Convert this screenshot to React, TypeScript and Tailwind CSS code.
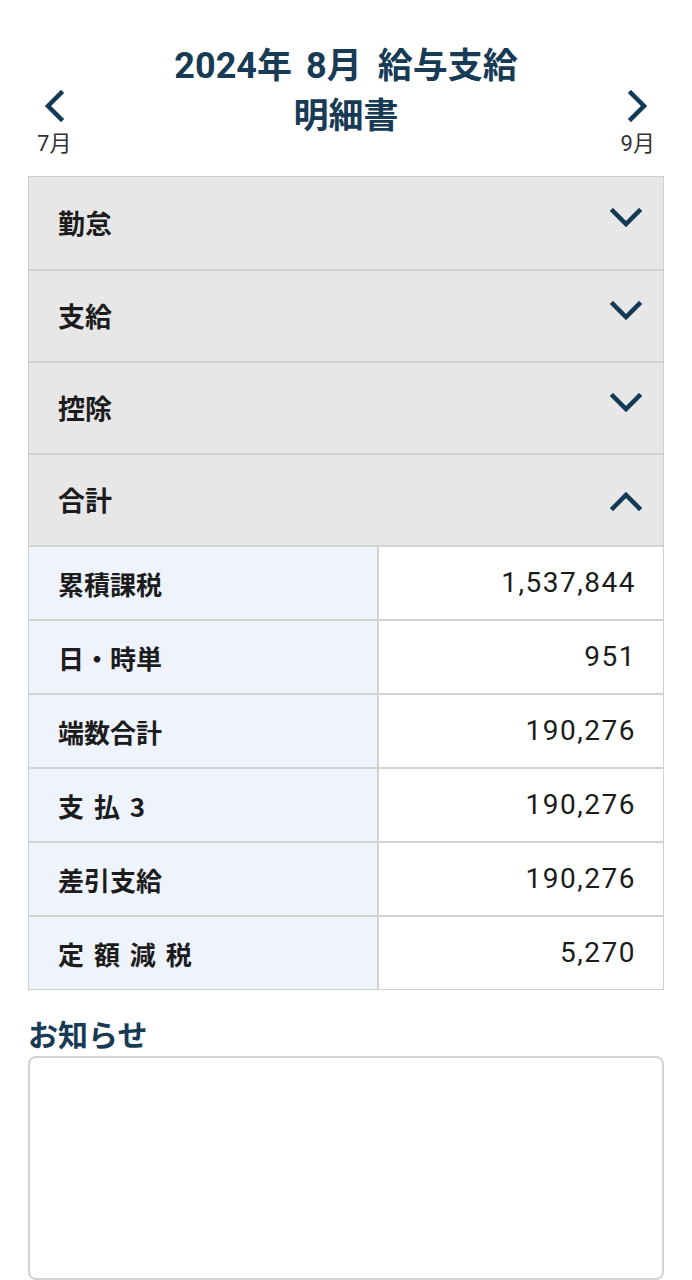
import { useState } from 'react'

const sections = ['勤怠', '支給', '控除', '合計']

const totals = [
	{ label: '累積課税', value: '1,537,844' },
	{ label: '日・時単', value: '951' },
	{ label: '端数合計', value: '190,276' },
	{ label: '支 払 3', value: '190,276' },
	{ label: '差引支給', value: '190,276' },
	{ label: '定 額 減 税', value: '5,270' },
]

const Chevron = ({ dir }: { dir: 'up' | 'down' | 'left' | 'right' }) => {
	const paths = {
		down: 'M3 3 L16 16 L29 3',
		up: 'M3 17 L16 4 L29 17',
		left: 'M17 3 L4 16 L17 29',
		right: 'M4 3 L17 16 L4 29',
	}
	const horizontal = dir === 'left' || dir === 'right'
	return (
		<svg
			width={horizontal ? 21 : 32}
			height={horizontal ? 32 : 20}
			viewBox={horizontal ? '0 0 21 32' : '0 0 32 20'}
			fill="none"
			stroke="#123a56"
			strokeWidth={4.5}
			strokeLinecap="square"
		>
			<path d={paths[dir]} />
		</svg>
	)
}

const App = () => {
	const [open, setOpen] = useState<string>('合計')

	return (
		<div
			className="min-h-screen w-[692px] bg-white text-[#1c1c1c]"
			style={{ fontFamily: '"Noto Sans CJK JP", "Noto Sans", sans-serif' }}
		>
			<div className="flex items-start justify-between px-[37px] pt-[38px]">
				<div className="flex flex-col items-center pt-[52px]">
					<Chevron dir="left" />
					<span className="mt-[8px] text-[22px] leading-none text-[#333]">
						<span className="font-['Roboto']">7</span>月
					</span>
				</div>
				<h1 className="text-center text-[35px] font-bold leading-[50px] text-[#173a55]">
					<span className="font-['Roboto'] text-[36px] leading-none">2024</span>年
					<span className="ml-[14px] font-['Roboto'] text-[36px] leading-none">8</span>月
					<span className="ml-[16px]">給与支給</span>
					<br />
					明細書
				</h1>
				<div className="flex flex-col items-center pt-[52px]">
					<Chevron dir="right" />
					<span className="mt-[8px] text-[22px] leading-none text-[#333]">
						<span className="font-['Roboto']">9</span>月
					</span>
				</div>
			</div>

			<div className="mx-[28px] mt-[21px] border border-[#cfcfcf]">
				{sections.map((s, i) => (
					<div key={s}>
						<button
							onClick={() => setOpen(open === s ? '' : s)}
							className={`flex h-[92px] w-full items-center justify-between bg-[#e7e7e7] pl-[29px] pr-[21px] ${i > 0 ? 'border-t-2 border-[#d2d2d2]' : ''}`}
						>
							<span className="text-[27px] font-bold">{s}</span>
							<span className={open === s ? 'mt-[2px]' : '-mt-[10px]'}>
								<Chevron dir={open === s ? 'up' : 'down'} />
							</span>
						</button>
						{open === s && s === '合計' && (
							<div>
								{totals.map((row) => (
									<div key={row.label} className="grid h-[74px] grid-cols-[348px_1fr] border-t-2 border-[#d2d2d2]">
										<div className="flex items-center bg-[#eef3fc] pl-[29px] text-[26px] font-bold [word-spacing:4px]">
											{row.label}
										</div>
										<div className="flex items-center justify-end border-l-2 border-[#d2d2d2] pr-[27px] font-['Roboto'] text-[28px] tracking-[1.5px]">
											{row.value}
										</div>
									</div>
								))}
							</div>
						)}
					</div>
				))}
			</div>

			<h2 className="mx-[28px] mt-[23px] text-[30px] font-bold leading-[40px] text-[#173a55]">お知らせ</h2>
			<textarea className="mx-[28px] mt-[3px] block h-[224px] w-[636px] resize-none rounded-[8px] border-2 border-[#d2d2d2]" />
		</div>
	)
}

export default App
